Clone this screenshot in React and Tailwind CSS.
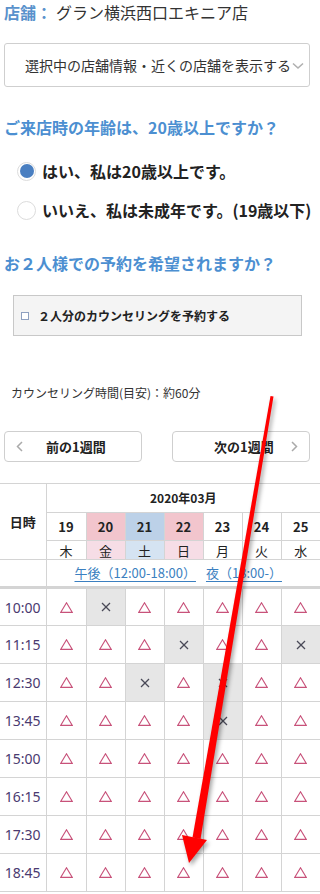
import React from "react";

const Tri = () => (
  <svg width="13" height="11" viewBox="0 0 13 11" className="mx-auto block">
    <polygon points="6.5,0.8 12.2,10.3 0.8,10.3" fill="none" stroke="#c8527a" strokeWidth="1.15" />
  </svg>
);
const Cross = () => (
  <svg width="10" height="10" viewBox="0 0 10 10" className="mx-auto block">
    <line x1="1" y1="1" x2="9" y2="9" stroke="#4a4a58" strokeWidth="1.3" />
    <line x1="9" y1="1" x2="1" y2="9" stroke="#4a4a58" strokeWidth="1.3" />
  </svg>
);

const times = ["10:00", "11:15", "12:30", "13:45", "15:00", "16:15", "17:30", "18:45"];
const crosses = {
  0: [1],
  1: [3, 6],
  2: [2, 4],
  3: [4],
};

const dates = [
  { d: "19", w: "木", dc: "bg-white", wc: "bg-white" },
  { d: "20", w: "金", dc: "bg-[#f2c5cd]", wc: "bg-[#f6dde6]" },
  { d: "21", w: "土", dc: "bg-[#bcd1e8]", wc: "bg-[#d5e3f2]" },
  { d: "22", w: "日", dc: "bg-[#f2c5cd]", wc: "bg-[#f6dde6]" },
  { d: "23", w: "月", dc: "bg-white", wc: "bg-white" },
  { d: "24", w: "火", dc: "bg-white", wc: "bg-white" },
  { d: "25", w: "水", dc: "bg-white", wc: "bg-white" },
];

export default function App() {
  return (
    <div className="relative w-[320px] h-[894px] overflow-hidden bg-white text-[#333] font-['Noto_Sans_CJK_JP','Noto_Sans',sans-serif]">
      <div className="h-[24px] flex items-center pl-[4px] text-[16px] leading-[24px]">
        <span className="font-bold text-[#5a92cc]">店舗：</span>
        <span className="ml-[4px]">グラン横浜西口エキニア店</span>
      </div>

      <div className="mt-[19px] ml-[4px] w-[306px] h-[44px] border border-[#cfcfcf] rounded-[3px] flex items-center pl-[20px] text-[14px] text-[#333]">
        <span>選択中の店舗情報・近くの店舗を表示する</span>
        <svg width="12" height="8" viewBox="0 0 12 8" className="ml-[1px] mt-[2px]">
          <polyline points="1,1.5 6,6 11,1.5" fill="none" stroke="#b0b0b0" strokeWidth="1.6" />
        </svg>
      </div>

      <div className="mt-[28px] h-[24px] pl-[4px] flex items-center text-[16px] font-bold text-[#4c8fd1]">
        ご来店時の年齢は、20歳以上ですか？
      </div>

      <div className="mt-[20px] h-[24px] pl-[17px] flex items-center text-[16px] font-bold text-[#222] whitespace-nowrap">
        <span className="w-[19px] h-[19px] rounded-full border border-[#dcdcdc] bg-white flex items-center justify-center">
          <span className="w-[14px] h-[14px] rounded-full bg-[#4a7fc1]" />
        </span>
        <span className="ml-[6px]">はい、私は20歳以上です。</span>
      </div>
      <div className="mt-[15px] h-[24px] pl-[17px] flex items-center text-[16px] font-bold text-[#222] whitespace-nowrap">
        <span className="w-[19px] h-[19px] rounded-full border border-[#dcdcdc] bg-white" />
        <span className="ml-[6px]">いいえ、私は未成年です。(19歳以下)</span>
      </div>

      <div className="mt-[29px] h-[24px] pl-[4px] flex items-center text-[16px] font-bold text-[#4c8fd1]">
        お２人様での予約を希望されますか？
      </div>

      <div className="mt-[20px] ml-[13px] w-[289px] h-[41px] border border-[#c8c8c8] bg-[#f4f4f4] flex items-center pl-[7px] text-[12px] font-bold text-[#222]">
        <span className="w-[8px] h-[8px] border border-[#8ea0c0] bg-white" />
        <span className="ml-[9px]">２人分のカウンセリングを予約する</span>
      </div>

      <div className="mt-[48px] h-[18px] pl-[11px] flex items-center text-[12px] text-[#333]">
        カウンセリング時間(目安)：約60分
      </div>

      <div className="mt-[29px] flex px-[4px] justify-between w-[314px]">
        <div className="w-[138px] h-[31px] border border-[#cfcfcf] rounded-[4px] flex items-center relative text-[13px] font-bold text-[#222]">
          <svg width="7" height="11" viewBox="0 0 7 11" className="absolute left-[11px] top-[9px]">
            <polyline points="6,1 1.5,5.5 6,10" fill="none" stroke="#aaa" strokeWidth="1.5" />
          </svg>
          <span className="ml-[41px]">前の1週間</span>
        </div>
        <div className="w-[138px] h-[31px] border border-[#cfcfcf] rounded-[4px] flex items-center relative text-[13px] font-bold text-[#222]">
          <span className="ml-[41px]">次の1週間</span>
          <svg width="7" height="11" viewBox="0 0 7 11" className="absolute right-[11px] top-[9px]">
            <polyline points="1,1 5.5,5.5 1,10" fill="none" stroke="#aaa" strokeWidth="1.5" />
          </svg>
        </div>
      </div>

      <table className="mt-[21px] w-[320px] table-fixed border-collapse text-center">
        <colgroup>
          <col className="w-[46px]" />
          <col className="w-[40px]" />
          <col className="w-[39px]" />
          <col className="w-[39px]" />
          <col className="w-[39px]" />
          <col className="w-[39px]" />
          <col className="w-[39px]" />
          <col className="w-[39px]" />
        </colgroup>
        <tbody>
          <tr className="h-[29px]">
            <td rowSpan={3} className="border-t border-b border-r border-[#d4d4d4] text-[13px] font-bold text-[#222]">日時</td>
            <td colSpan={7} className="border border-r-0 border-[#d4d4d4] text-[12px] font-bold text-[#222]">2020年03月</td>
          </tr>
          <tr className="h-[28px]">
            {dates.map((x, i) => (
              <td key={i} className={`border border-[#d4d4d4] text-[13px] font-bold text-[#222] ${x.dc} ${i === 6 ? "border-r-0" : ""}`}>{x.d}</td>
            ))}
          </tr>
          <tr className="h-[19px]">
            {dates.map((x, i) => (
              <td key={i} className={`border border-[#d4d4d4] text-[13px] leading-[17px] text-[#222] ${x.wc} ${i === 6 ? "border-r-0" : ""}`}>{x.w}</td>
            ))}
          </tr>
          <tr className="h-[28px]">
            <td className="border-r border-b-[3px] border-[#d4d4d4]" />
            <td colSpan={7} className="border-b-[3px] border-[#d4d4d4] text-[13px] text-[#3b7fc0] text-left pl-[28px] whitespace-nowrap">
              <span className="underline underline-offset-[3px]">午後（12:00-18:00）</span>
              <span className="ml-[10px] underline underline-offset-[3px]">夜（18:00-）</span>
            </td>
          </tr>
          {times.map((t, r) => (
            <tr key={t} className="h-[38px]">
              <td className="border-r border-b border-[#d4d4d4] text-[14px] text-[#4a3a70] font-['Noto_Sans',sans-serif]">{t}</td>
              {[0, 1, 2, 3, 4, 5, 6].map((c) => {
                const x = (crosses[r] || []).includes(c);
                return (
                  <td key={c} className={`border-b border-[#d4d4d4] ${c === 6 ? "" : "border-r"} ${x ? "bg-[#e6e6e6]" : "bg-white"}`}>
                    {x ? <Cross /> : <Tri />}
                  </td>
                );
              })}
            </tr>
          ))}
        </tbody>
      </table>

      <svg width="320" height="894" viewBox="0 0 320 894" className="absolute left-0 top-0 pointer-events-none drop-shadow-[2px_3px_2px_rgba(0,0,0,0.35)]">
        <polygon points="270.5,396 273.5,396.5 200.5,839 192.5,837.5" fill="#ff0000" />
        <polygon points="182,835 207,840 189,863" fill="#ff0000" />
      </svg>
    </div>
  );
}
